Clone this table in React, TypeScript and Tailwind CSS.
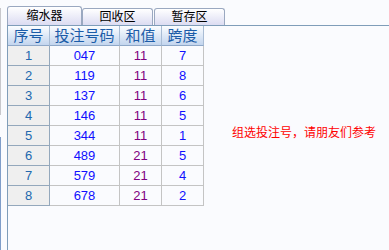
import React from "react";

const rows: [number, string, number, number][] = [
  [1, "047", 11, 7],
  [2, "119", 11, 8],
  [3, "137", 11, 6],
  [4, "146", 11, 5],
  [5, "344", 11, 1],
  [6, "489", 21, 5],
  [7, "579", 21, 4],
  [8, "678", 21, 2],
];

function Tab({ label, active, w }: { label: string; active?: boolean; w: string }) {
  return (
    <div
      className={`${w} ${active ? "h-[19px]" : "h-[17px]"} rounded-t-[3px] border border-b-0 border-[#9aa8c0] bg-linear-to-b from-white to-[#dcdcf2] flex items-center justify-center text-[12px] text-black leading-none`}
    >
      {label}
    </div>
  );
}

export default function App() {
  return (
    <div className="w-[389px] h-[250px] bg-[#fafbfe] flex overflow-hidden font-['Liberation_Sans','Noto_Sans_CJK_SC',sans-serif]">
      <div className="w-[7px] shrink-0 flex flex-col">
        <div className="h-[8px]" />
        <div className="h-[107px] w-px bg-[#c8c8cc]" />
        <div className="h-[22px]" />
        <div className="flex-1 w-px bg-[#7f9dc9]" />
      </div>
      <div className="flex-1 flex flex-col">
        <div className="h-[25px] flex items-end">
          <Tab label="缩水器" active w="w-[75px]" />
          <Tab label="回收区" w="w-[71px]" />
          <div className="w-px" />
          <Tab label="暂存区" w="w-[71px]" />
        </div>
        <div className="flex-1 border-l border-t border-[#7f9db9] flex items-start">
          <div className="grid grid-cols-[42px_70px_42px_42px]">
            {["序号", "投注号码", "和值", "跨度"].map((h) => (
              <div
                key={h}
                className="h-[20px] border-r border-b border-r-[#a9bcd4] border-b-[#8fa8c8] bg-linear-to-b from-[#fbfdff] to-[#c3d5ee] flex items-center justify-center text-[15px] leading-none text-[#1b5ca8]"
              >
                {h}
              </div>
            ))}
            {rows.map(([n, code, sum, span]) => (
              <React.Fragment key={n}>
                <div className="h-[20px] border-r border-b border-[#94a8bc] bg-[#efefef] flex items-center justify-center text-[13px] leading-none text-[#2268ae]">
                  {n}
                </div>
                <div className="h-[20px] border-r border-b border-[#c4c4c4] flex items-center justify-center text-[13px] leading-none text-[#1010ff]">
                  {code}
                </div>
                <div className="h-[20px] border-r border-b border-[#c4c4c4] flex items-center justify-center text-[13px] leading-none text-[#800080]">
                  {sum}
                </div>
                <div className="h-[20px] border-r border-b border-[#c4c4c4] flex items-center justify-center text-[13px] leading-none text-[#1010ff]">
                  {span}
                </div>
              </React.Fragment>
            ))}
          </div>
          <div className="ml-[28px] mt-[100px] text-[12px] leading-[12px] text-[#ff0000] whitespace-nowrap font-['Noto_Sans_CJK_SC',sans-serif]">
            组选投注号，请朋友们参考
          </div>
        </div>
      </div>
    </div>
  );
}
